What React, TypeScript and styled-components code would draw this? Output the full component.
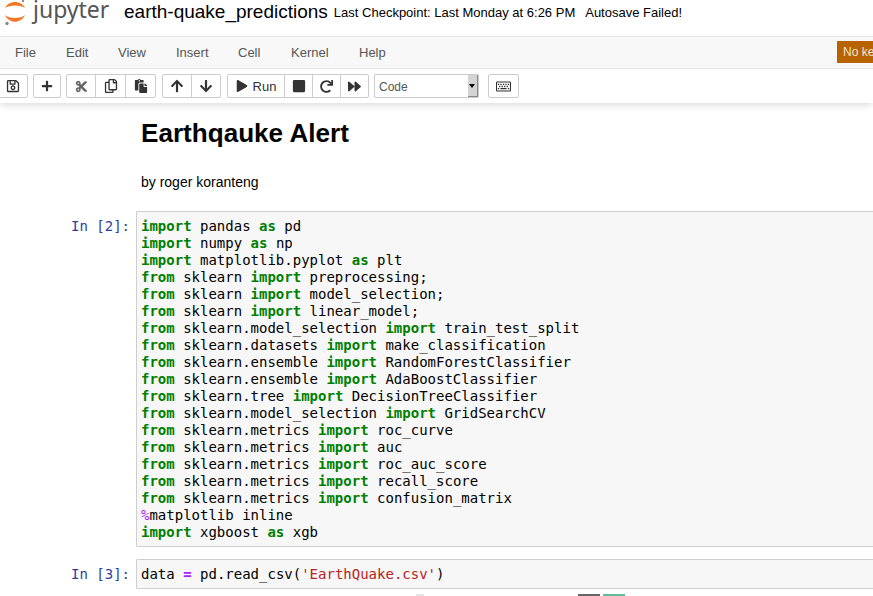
import React from 'react';
import styled, { createGlobalStyle } from 'styled-components';
import {
  FaRegSave, FaPlus, FaCut, FaRegCopy, FaPaste, FaArrowUp, FaArrowDown,
  FaPlay, FaStop, FaRedo, FaForward, FaRegKeyboard,
} from 'react-icons/fa';

const GlobalStyle = createGlobalStyle`
  html, body {
    margin: 0;
    padding: 0;
    background: #fff;
    overflow: hidden;
    height: 596px;
  }
  body {
    font-family: "Liberation Sans", Arial, sans-serif;
    color: #000;
  }
`;

const Page = styled.div`
  width: 873px;
  height: 596px;
  overflow: hidden;
`;

const Header = styled.div`
  height: 23px;
  padding-bottom: 13px;
  display: flex;
  align-items: center;
  white-space: nowrap;
  border-bottom: 1px solid #e7e7e7;
`;

const LogoBox = styled.div`
  width: 124px;
  height: 26px;
  flex-shrink: 0;
  align-self: flex-start;
`;

const Title = styled.span`
  font-size: 19px;
`;

const Checkpoint = styled.span`
  font-size: 13px;
  margin: 2px 0 0 6px;
`;

const Autosave = styled.span`
  font-size: 13px;
  margin: 2px 0 0 10px;
`;

const MenuBar = styled.div`
  height: 31px;
  background: #f8f8f8;
  border-bottom: 1px solid #e7e7e7;
  display: flex;
  align-items: center;
  padding-left: 15px;
  position: relative;
  font-size: 13px;
  color: #555;
`;

const MenuItem = styled.span<{ $w: number }>`
  width: ${p => p.$w}px;
`;

const KernelBadge = styled.span`
  position: absolute;
  left: 837px;
  top: 4px;
  width: 60px;
  height: 22px;
  line-height: 22px;
  padding-left: 6px;
  background: #b86200;
  color: #f5e6d3;
  font-size: 12px;
  white-space: nowrap;
`;

const Toolbar = styled.div`
  height: 34px;
  display: flex;
  align-items: center;
  box-shadow: 0 4px 6px -1px rgba(0, 0, 0, 0.12);
  position: relative;
`;

const BtnGroup = styled.div<{ $ml: number }>`
  display: flex;
  margin-left: ${p => p.$ml}px;
  height: 22px;
  border: 1px solid #ccc;
  border-radius: 2px;
  background: #fff;
  color: #333;
`;

const Btn = styled.div<{ $w: number; $light?: boolean }>`
  width: ${p => p.$w}px;
  display: flex;
  align-items: center;
  justify-content: center;
  gap: 5px;
  font-size: 13px;
  color: ${p => (p.$light ? '#666' : '#333')};
  border-left: 1px solid #ccc;
  &:first-child {
    border-left: none;
  }
`;

const CellSelect = styled.div`
  margin-left: 5px;
  width: 99px;
  height: 22px;
  border: 1px solid #ccc;
  border-radius: 2px;
  position: relative;
  font-size: 12px;
  color: #555;
  line-height: 25px;
  padding-left: 4px;
`;

const SelectArrow = styled.span`
  position: absolute;
  right: 0;
  top: 0;
  bottom: 0;
  width: 10px;
  background: #d4d4d4;
  border-right: 1px solid #888;
  border-bottom: 1px solid #888;
  box-sizing: border-box;
  &::after {
    content: '';
    position: absolute;
    left: 1px;
    top: 9px;
    border-left: 3px solid transparent;
    border-right: 3px solid transparent;
    border-top: 4px solid #000;
  }
`;

const NotebookBody = styled.div`
  padding-top: 14px;
`;

const MarkdownCell = styled.div`
  padding-left: 141px;
`;

const Heading = styled.h1`
  margin: 0;
  font-size: 26.1px;
  font-weight: 700;
  line-height: 32px;
`;

const Byline = styled.p`
  margin: 24px 0 0;
  font-size: 14px;
  line-height: 18px;
`;

const CodeCell = styled.div<{ $mt: number }>`
  display: flex;
  margin-top: ${p => p.$mt}px;
`;

const Prompt = styled.div`
  width: 136px;
  flex-shrink: 0;
  box-sizing: border-box;
  text-align: right;
  padding: 7px 6px 0 0;
  font-family: "DejaVu Sans Mono", monospace;
  font-size: 14px;
  line-height: 17px;
  color: #303f9f;
`;

const CodeBox = styled.pre`
  flex: 1;
  margin: 0;
  padding: 6px 4px 5px;
  background: #f7f7f7;
  border: 1px solid #cfcfcf;
  border-right: none;
  border-radius: 2px 0 0 2px;
  font-family: "DejaVu Sans Mono", monospace;
  font-size: 14px;
  line-height: 17px;
  color: #000;
`;

const Kw = styled.span`
  color: #008000;
  font-weight: 700;
`;

const Magic = styled.span`
  color: #aa22ff;
`;

const Op = styled.span`
  color: #aa22ff;
  font-weight: 700;
`;

const Str = styled.span`
  color: #ba2121;
`;

const NextOutput = styled.div`
  display: flex;
  margin: 5px 0 0 416px;
  height: 2px;
`;

const Sliver = styled.span<{ $color: string; $w: number; $ml: number }>`
  width: ${p => p.$w}px;
  margin-left: ${p => p.$ml}px;
  background: ${p => p.$color};
`;

const Logo = () => (
  <svg width="110" height="26" viewBox="0 0 110 26">
    <path d="M5 8 C9 0 21 0 25 8 C21 4.5 9 4.5 5 8 Z" fill="#f37726" />
    <path d="M5 15 C9 24 21 24 25 15 C21 19 9 19 5 15 Z" fill="#f37726" />
    <circle cx="7" cy="23.5" r="1.7" fill="#8a8a8b" />
    <circle cx="23" cy="1" r="1.2" fill="#8a8a8b" />
    <text x="33" y="18" fontFamily="'Noto Sans', sans-serif" fontSize="23" fill="#555">jupyter</text>
  </svg>
);

const lines: React.ReactNode[] = [
  <><Kw>import</Kw> pandas <Kw>as</Kw> pd</>,
  <><Kw>import</Kw> numpy <Kw>as</Kw> np</>,
  <><Kw>import</Kw> matplotlib.pyplot <Kw>as</Kw> plt</>,
  <><Kw>from</Kw> sklearn <Kw>import</Kw> preprocessing;</>,
  <><Kw>from</Kw> sklearn <Kw>import</Kw> model_selection;</>,
  <><Kw>from</Kw> sklearn <Kw>import</Kw> linear_model;</>,
  <><Kw>from</Kw> sklearn.model_selection <Kw>import</Kw> train_test_split</>,
  <><Kw>from</Kw> sklearn.datasets <Kw>import</Kw> make_classification</>,
  <><Kw>from</Kw> sklearn.ensemble <Kw>import</Kw> RandomForestClassifier</>,
  <><Kw>from</Kw> sklearn.ensemble <Kw>import</Kw> AdaBoostClassifier</>,
  <><Kw>from</Kw> sklearn.tree <Kw>import</Kw> DecisionTreeClassifier</>,
  <><Kw>from</Kw> sklearn.model_selection <Kw>import</Kw> GridSearchCV</>,
  <><Kw>from</Kw> sklearn.metrics <Kw>import</Kw> roc_curve</>,
  <><Kw>from</Kw> sklearn.metrics <Kw>import</Kw> auc</>,
  <><Kw>from</Kw> sklearn.metrics <Kw>import</Kw> roc_auc_score</>,
  <><Kw>from</Kw> sklearn.metrics <Kw>import</Kw> recall_score</>,
  <><Kw>from</Kw> sklearn.metrics <Kw>import</Kw> confusion_matrix</>,
  <><Magic>%</Magic>matplotlib inline</>,
  <><Kw>import</Kw> xgboost <Kw>as</Kw> xgb</>,
];

const menus: [string, number][] = [
  ['File', 51], ['Edit', 52], ['View', 58], ['Insert', 62], ['Cell', 53], ['Kernel', 68], ['Help', 60],
];

const App: React.FC = () => (
  <Page>
    <GlobalStyle />
    <Header>
      <LogoBox><Logo /></LogoBox>
      <Title>earth-quake_predictions</Title>
      <Checkpoint>Last Checkpoint: Last Monday at 6:26 PM</Checkpoint>
      <Autosave>Autosave Failed!</Autosave>
    </Header>
    <MenuBar>
      {menus.map(([m, w]) => <MenuItem key={m} $w={w}>{m}</MenuItem>)}
      <KernelBadge>No kernel</KernelBadge>
    </MenuBar>
    <Toolbar>
      <BtnGroup $ml={-2}><Btn $w={28}><FaRegSave size={14} /></Btn></BtnGroup>
      <BtnGroup $ml={5}><Btn $w={26}><FaPlus size={12} /></Btn></BtnGroup>
      <BtnGroup $ml={5}>
        <Btn $w={28} $light><FaCut size={13} /></Btn>
        <Btn $w={29}><FaRegCopy size={14} /></Btn>
        <Btn $w={29}><FaPaste size={14} /></Btn>
      </BtnGroup>
      <BtnGroup $ml={6}>
        <Btn $w={28}><FaArrowUp size={14} /></Btn>
        <Btn $w={28}><FaArrowDown size={14} /></Btn>
      </BtnGroup>
      <BtnGroup $ml={6}>
        <Btn $w={56}><FaPlay size={12} />Run</Btn>
        <Btn $w={27}><FaStop size={14} /></Btn>
        <Btn $w={27}><FaRedo size={13} /></Btn>
        <Btn $w={27}><FaForward size={13} /></Btn>
      </BtnGroup>
      <CellSelect>Code<SelectArrow /></CellSelect>
      <BtnGroup $ml={9}><Btn $w={29}><FaRegKeyboard size={15} /></Btn></BtnGroup>
    </Toolbar>
    <NotebookBody>
      <MarkdownCell>
        <Heading>Earthqauke Alert</Heading>
        <Byline>by roger koranteng</Byline>
      </MarkdownCell>
      <CodeCell $mt={20}>
        <Prompt>In [2]:</Prompt>
        <CodeBox>{lines.map((l, i) => <React.Fragment key={i}>{l}{i < lines.length - 1 ? '\n' : ''}</React.Fragment>)}</CodeBox>
      </CodeCell>
      <CodeCell $mt={12}>
        <Prompt>In [3]:</Prompt>
        <CodeBox>data <Op>=</Op> pd.read_csv(<Str>'EarthQuake.csv'</Str>)</CodeBox>
      </CodeCell>
      <NextOutput>
        <Sliver $color="#e4e4e4" $w={8} $ml={0} />
        <Sliver $color="#666" $w={22} $ml={154} />
        <Sliver $color="#5fc09a" $w={22} $ml={3} />
      </NextOutput>
    </NotebookBody>
  </Page>
);

export default App;
